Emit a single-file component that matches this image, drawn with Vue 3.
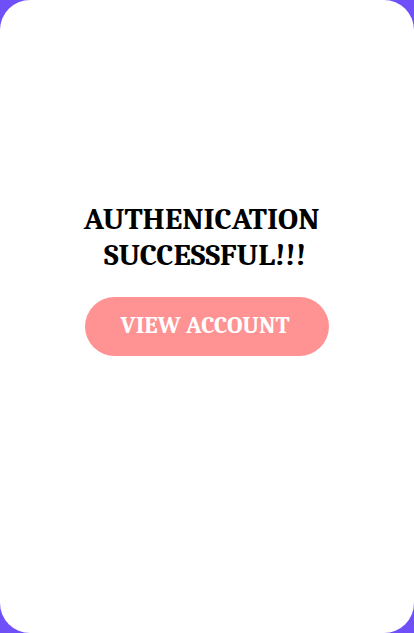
<script setup>
function viewAccount() {
  window.location.hash = 'account'
}
</script>

<template>
  <div class="page">
    <main class="card">
      <h1 class="title">AUTHENICATION&nbsp;<br />SUCCESSFUL!!!</h1>
      <button class="action" type="button" @click="viewAccount">VIEW ACCOUNT</button>
    </main>
  </div>
</template>

<style>
body {
  background: #6f50f8;
}
</style>

<style scoped>
.page {
  display: flex;
  min-height: 100vh;
  background: #6f50f8;
}

.card {
  flex: 1;
  display: flex;
  flex-direction: column;
  align-items: center;
  padding: 201px 24px 24px;
  border-radius: 30px;
  background: #fff;
  font-family: Cambria, "Noto Serif", "Liberation Serif", serif;
  font-weight: 700;
}

.title {
  margin: 0;
  padding-right: 4px;
  color: #000;
  font-size: 31px;
  line-height: 36px;
  text-align: center;
}

.action {
  margin-top: 24px;
  width: 244px;
  height: 59px;
  padding: 0 4px 4px 0;
  border: 0;
  border-radius: 30px;
  background: #ff9292;
  color: #fff;
  font: inherit;
  font-size: 24px;
  cursor: pointer;
}
</style>
